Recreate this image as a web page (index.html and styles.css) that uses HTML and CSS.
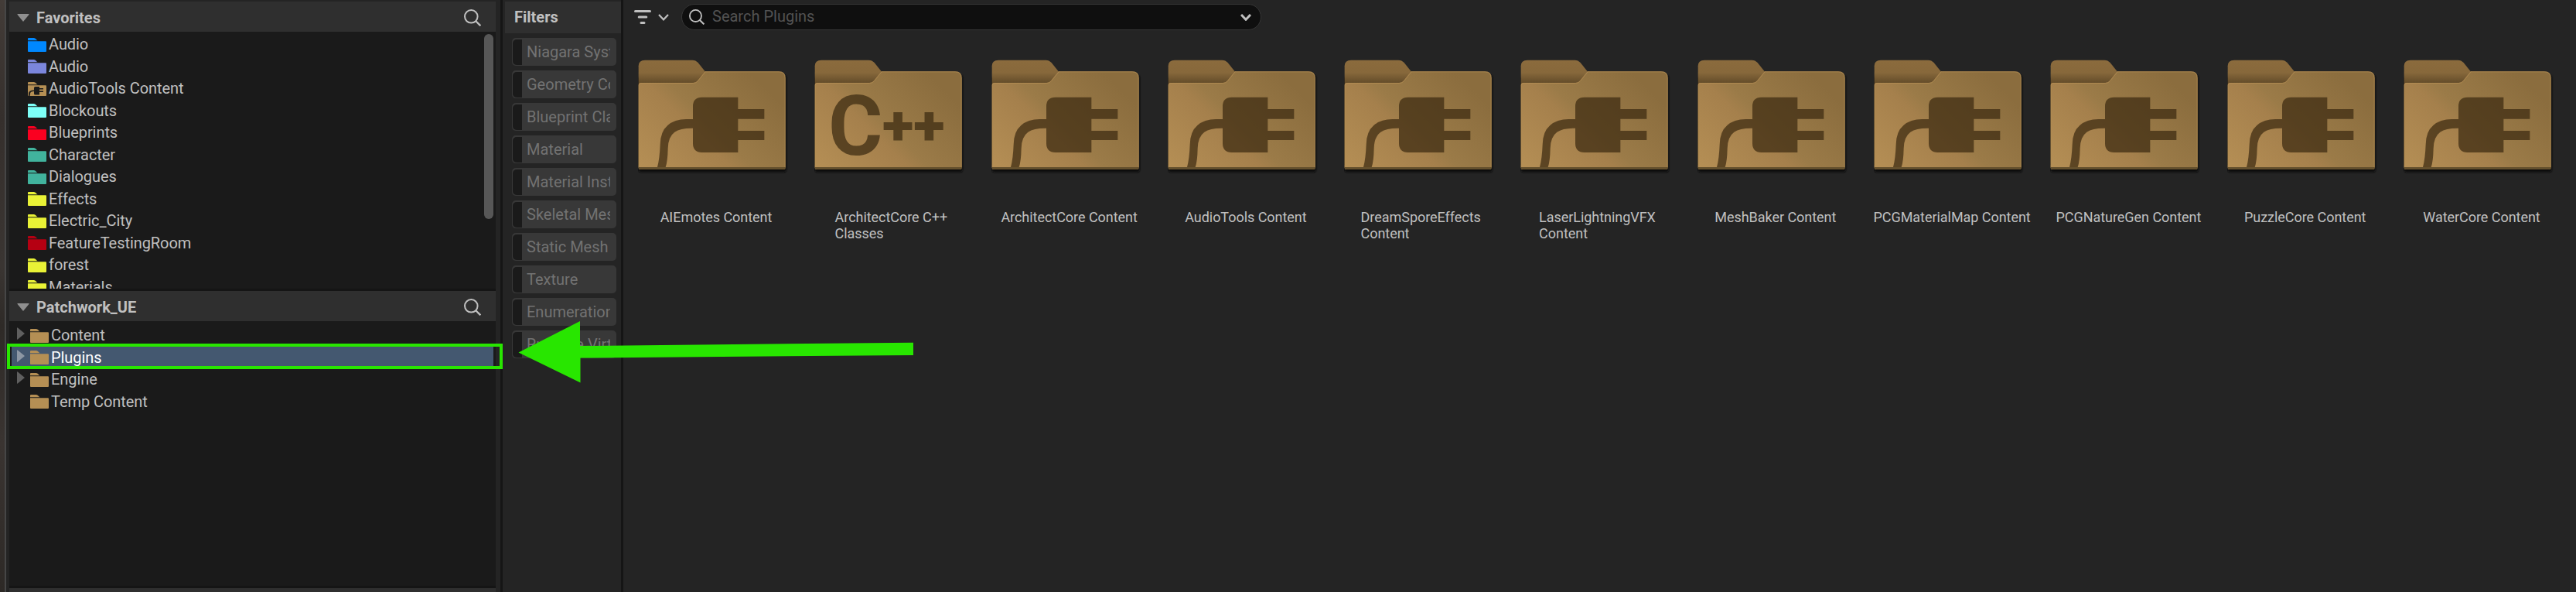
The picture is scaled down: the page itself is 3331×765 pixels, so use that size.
FILE: index.html
```
<!DOCTYPE html>
<html lang="en">
<head>
<meta charset="utf-8">
<title>Content Browser</title>
<link rel="stylesheet" href="styles.css">
</head>
<body>
<svg class="defs" width="0" height="0">
  <defs>
    <linearGradient id="face" gradientUnits="userSpaceOnUse" x1="130" y1="700" x2="530" y2="300">
      <stop offset="0" stop-color="#b58f55"/><stop offset=".45" stop-color="#a5804c"/><stop offset=".55" stop-color="#9b7b48"/><stop offset="1" stop-color="#8b6d3e"/>
    </linearGradient>
    <linearGradient id="tab" x1="0" y1="0" x2="0" y2="1">
      <stop offset="0" stop-color="#8b6b3d"/><stop offset=".5" stop-color="#87683b"/><stop offset="1" stop-color="#5c4626"/>
    </linearGradient>
    <filter id="soft" x="-5%" y="-5%" width="110%" height="110%"><feGaussianBlur stdDeviation="3"/></filter>
    <symbol id="folder" viewBox="0 0 24 18">
      <path d="M0 3V1Q0 0 1 0H8Q9.500 0 12 3Z"/>
      <path d="M0 3H12L13 4.200H0Z" opacity=".25"/>
      <path d="M0 4.200H23Q24 4.200 24 5.200V17Q24 18 23 18H1Q0 18 0 17Z"/>
    </symbol>
    <symbol id="search" viewBox="0 0 22 22">
      <circle cx="9.300" cy="9.300" r="8.300" fill="none" stroke="currentColor" stroke-width="2"/>
      <path d="M15 15L21.300 21.300" stroke="currentColor" stroke-width="2.300"/>
    </symbol>
    <symbol id="down" viewBox="0 0 16 10"><path d="M1 0H15Q16.300 0 15.200 1.200L8 10L.8 1.200Q-.3 0 1 0Z"/></symbol>
    <symbol id="right" viewBox="0 0 10 16"><path d="M0 1Q0-.3 1.200 .8L10 8L1.200 15.200Q0 16.300 0 15Z"/></symbol>
    <symbol id="bigfolder" viewBox="75 225 585 450">
      <path d="M78 330V300H620Q648 280 651 300V657Q651 668 641 668H86Q76 668 76 658Z" fill="#0b0b0b" filter="url(#soft)"/>
      <path d="M77 330V256Q77 233 102 233H286Q299 233 308 243L335 277V330Z" fill="url(#tab)"/>
      <path d="M77 330Q77 321 86 321H288Q300 321 307 312L335 277H622Q647 277 647 302V650Q647 657 640 657H84Q77 657 77 650Z" fill="url(#face)"/>
      <path d="M78.500 648V331Q78.500 322.500 87 322.500H289Q301 322.500 308 313L336 278.500H622Q645.500 278.500 645.500 302V648" fill="none" stroke="#b58f54" stroke-width="3" opacity=".75"/>
      <path d="M77 648H647V651Q647 657 640 657H84Q77 657 77 651Z" fill="#64502d"/>
    </symbol>
    <symbol id="plug" viewBox="75 225 585 450">
      <g fill="#3b2a11" opacity=".72">
        <path d="M323 377H463V423H565V461H463V507H565V543H463V591H323Q288 591 288 556V497Q240 496 217 512Q192 530 191 575Q190 625 182 648H150Q159 615 161 560Q162 510 190 486Q217 462 262 462H288V412Q288 377 323 377Z"/>
      </g>
    </symbol>
    <symbol id="cpp" viewBox="75 225 585 450">
      <g fill="#3b2a11" opacity=".72">
        <text class="cpp-c" x="129" y="599" textLength="211" lengthAdjust="spacingAndGlyphs">C</text>
        <text class="cpp-plus" x="339" y="562" textLength="242" lengthAdjust="spacingAndGlyphs">++</text>
      </g>
    </symbol>
  </defs>
</svg>
<div class="window">
  <div class="viewport-edge"></div>
  <aside class="sources">
    <header class="head"><svg class="tri"><use href="#down"/></svg><h2>Favorites</h2><svg class="mag"><use href="#search"/></svg></header>
    <ul class="tree favorites">
      <li><svg class="fold blue"><use href="#folder"/></svg>Audio</li>
      <li><svg class="fold violet"><use href="#folder"/></svg>Audio</li>
      <li><svg class="fold tan" viewBox="0 0 24 18"><use href="#folder"/><path d="M9.500 6H15V8H20V9.500H15V11.500H20V13H15V16.500H9.500Q8 16.500 8 15V12Q3 12 3 15L2.500 18H1V15Q1 10.500 8 10.500V7.500Q8 6 9.500 6Z" fill="#1a1a1a"/></svg>AudioTools Content</li>
      <li><svg class="fold cyan"><use href="#folder"/></svg>Blockouts</li>
      <li><svg class="fold red"><use href="#folder"/></svg>Blueprints</li>
      <li><svg class="fold teal"><use href="#folder"/></svg>Character</li>
      <li><svg class="fold teal"><use href="#folder"/></svg>Dialogues</li>
      <li><svg class="fold yellow"><use href="#folder"/></svg>Effects</li>
      <li><svg class="fold yellow"><use href="#folder"/></svg>Electric_City</li>
      <li><svg class="fold crimson"><use href="#folder"/></svg>FeatureTestingRoom</li>
      <li><svg class="fold yellow"><use href="#folder"/></svg>forest</li>
      <li><svg class="fold yellow"><use href="#folder"/></svg>Materials</li>
    </ul>
    <div class="scrollbar"></div>
    <div class="split"></div>
    <header class="head"><svg class="tri"><use href="#down"/></svg><h2>Patchwork_UE</h2><svg class="mag"><use href="#search"/></svg></header>
    <ul class="tree project">
      <li><svg class="arrow"><use href="#right"/></svg><svg class="fold tan"><use href="#folder"/></svg>Content</li>
      <li class="selected"><svg class="arrow"><use href="#right"/></svg><svg class="fold tan"><use href="#folder"/></svg>Plugins</li>
      <li><svg class="arrow"><use href="#right"/></svg><svg class="fold tan"><use href="#folder"/></svg>Engine</li>
      <li><span class="arrow"></span><svg class="fold tan"><use href="#folder"/></svg>Temp Content</li>
    </ul>
    <div class="split"></div>
    <div class="head collections"></div>
  </aside>
  <section class="filters">
    <header class="filters-head"><h2>Filters</h2></header>
    <ul class="pills">
      <li><span>Niagara System</span></li>
      <li><span>Geometry Collection</span></li>
      <li><span>Blueprint Class</span></li>
      <li><span>Material</span></li>
      <li><span>Material Instance</span></li>
      <li><span>Skeletal Mesh</span></li>
      <li><span>Static Mesh</span></li>
      <li><span>Texture</span></li>
      <li><span>Enumeration</span></li>
      <li><span>Runtime Virtual Texture</span></li>
    </ul>
  </section>
  <main class="assets">
    <div class="toolbar">
      <svg class="filter-icon" viewBox="0 0 22 18"><path d="M1.500 1.500H20.500M6.200 9H15.800M9 16.500H13" stroke="currentColor" stroke-width="3" stroke-linecap="round"/></svg>
      <svg class="chev" viewBox="0 0 14 9"><path d="M1 1L7 7.300L13 1" fill="none" stroke="currentColor" stroke-width="2.200"/></svg>
      <div class="searchbox">
        <svg class="mag small"><use href="#search"/></svg>
        <span class="placeholder">Search Plugins</span>
        <svg class="chev bold" viewBox="0 0 14 9"><path d="M1 1L7 7.300L13 1" fill="none" stroke="currentColor" stroke-width="3"/></svg>
      </div>
    </div>
    <div class="grid">
      <div class="tile"><svg class="big"><use href="#bigfolder"/><use href="#plug"/></svg><p>AIEmotes Content</p></div>
      <div class="tile"><svg class="big"><use href="#bigfolder"/><use href="#cpp"/></svg><p class="two">ArchitectCore C++<br>Classes</p></div>
      <div class="tile"><svg class="big"><use href="#bigfolder"/><use href="#plug"/></svg><p>ArchitectCore Content</p></div>
      <div class="tile"><svg class="big"><use href="#bigfolder"/><use href="#plug"/></svg><p>AudioTools Content</p></div>
      <div class="tile"><svg class="big"><use href="#bigfolder"/><use href="#plug"/></svg><p class="two">DreamSporeEffects<br>Content</p></div>
      <div class="tile"><svg class="big"><use href="#bigfolder"/><use href="#plug"/></svg><p class="two">LaserLightningVFX<br>Content</p></div>
      <div class="tile"><svg class="big"><use href="#bigfolder"/><use href="#plug"/></svg><p>MeshBaker Content</p></div>
      <div class="tile"><svg class="big"><use href="#bigfolder"/><use href="#plug"/></svg><p>PCGMaterialMap Content</p></div>
      <div class="tile"><svg class="big"><use href="#bigfolder"/><use href="#plug"/></svg><p>PCGNatureGen Content</p></div>
      <div class="tile"><svg class="big"><use href="#bigfolder"/><use href="#plug"/></svg><p>PuzzleCore Content</p></div>
      <div class="tile"><svg class="big"><use href="#bigfolder"/><use href="#plug"/></svg><p>WaterCore Content</p></div>
    </div>
  </main>
  <div class="callout-box"></div>
  <svg class="callout-arrow" viewBox="670 410 520 90"><path d="M670.500 455.500L750 415V447L1181 442.700V459L750.500 462.500V494.500Z" fill="#28e600"/></svg>
</div>
</body>
</html>
```
FILE: styles.css
```
* { box-sizing: border-box; }
body {
  margin: 0;
  background: #242424;
  color: #c0c0c0;
  font: 20px/28px Roboto, "Liberation Sans", sans-serif;
}
h2, p, ul { margin: 0; padding: 0; list-style: none; }
h2 { font-size: 20px; font-weight: 700; line-height: 24px; }
svg { display: block; flex: none; }
.defs { position: absolute; }
.window {
  position: relative;
  display: flex;
  width: 3331px;
  height: 765px;
  overflow: hidden;
}
.viewport-edge {
  width: 8px;
  flex: none;
  border-right: 2px solid #464646;
  background: linear-gradient(#433c38, #352f2c 20%, #3a3532 45%, #2e2a27 55%, #3a3431 75%, #2d2926);
}

/* Sources panel */
.sources {
  position: relative;
  display: flex;
  flex-direction: column;
  flex: none;
  width: 629px;
  margin-left: 4px;
  padding-top: 2px;
}
.head {
  display: flex;
  align-items: center;
  flex: none;
  height: 39px;
  padding: 0 19px 0 10px;
  background: #2f2f2f;
}
.head h2 { flex: 1; margin-left: 9px; padding-top: 3px; }
.tri { width: 16px; height: 10px; margin-top: 3px; fill: #8f8f8f; }
.mag { width: 22px; height: 22px; margin-top: 3px; color: #c0c0c0; }
.collections { height: 5px; }
.split { flex: none; height: 3px; background: #151515; }
.tree { overflow: hidden; background: #1a1a1a; letter-spacing: -.06px; }
.tree li { display: flex; align-items: center; height: 28.5px; white-space: pre; }
.favorites { height: 332px; padding: 2px 0 0 24px; }
.project { height: 342px; padding: 4px 3px 0 3px; }
.project li { padding-left: 7px; }
.fold { width: 24px; height: 18px; margin: 1px 3px 0 0; }
.arrow { width: 10px; height: 16px; margin: -4px 7px 0 0; fill: #5f5f5f; }
.selected { background: #445870; color: #fff; }
.selected .arrow { fill: #8d97a4; }
.blue { fill: #0088ff; }
.violet { fill: #7b86dc; }
.tan { fill: #b58f54; }
.cyan { fill: #7dfff8; }
.red { fill: #fa0020; }
.teal { fill: #41b39d; }
.yellow { fill: #e9f236; }
.crimson { fill: #b50012; }
.scrollbar {
  position: absolute;
  left: 614px;
  top: 44px;
  width: 12px;
  height: 239px;
  border-radius: 6px;
  background: #575757;
}

/* Filters panel */
.filters {
  flex: none;
  width: 159px;
  margin-left: 6px;
  padding: 2px 0 0 3px;
  border: solid #151515;
  border-width: 0 3px;
}
.filters-head { height: 41px; padding: 8px 0 0 12px; background: #2f2f2f; }
.pills { display: grid; grid-template-columns: minmax(0, 1fr); gap: 6px; padding: 6px 6px 0 9px; }
.pills li {
  display: flex;
  height: 36px;
  padding: 2px 8px 1px 1px;
  border-radius: 5px;
  background: #383838;
  color: #727272;
}
.pills li::before { content: ""; flex: none; width: 12px; border-radius: 5px 0 0 5px; background: #1a1a1a; }
.pills span { flex: 1; min-width: 0; margin-left: 6px; padding-top: 2px; overflow: hidden; white-space: nowrap; }

/* Asset view */
.assets { flex: 1; min-width: 0; }
.toolbar { display: flex; align-items: center; height: 44px; padding-left: 14px; }
.filter-icon { width: 22px; height: 18px; }
.chev { width: 14px; height: 9px; margin-left: 9px; }
.searchbox {
  display: flex;
  align-items: center;
  width: 750px;
  height: 34px;
  margin-left: 16px;
  padding: 0 12px 0 9px;
  border: 1px solid #363636;
  border-radius: 17px;
  background: #0f0f0f;
}
.small { width: 20px; height: 20px; margin-top: -1px; }
.placeholder { flex: 1; margin: -3px 0 0 10px; color: #525252; }
.bold { margin-left: 0; }
.grid { display: grid; grid-template-columns: repeat(11, 228.3px); margin: 31px 0 0 19px; }
.big { width: 195px; height: 150px; }
.tile p {
  width: max-content;
  margin: 45px 0 0 101px;
  transform: translateX(-50%);
  font-size: 18px;
  line-height: 21px;
  letter-spacing: -.04px;
  white-space: nowrap;
}
.tile .two { margin-left: 99px; }
.cpp-c { font: 700 320px Roboto, sans-serif; }
.cpp-plus { font: 900 210px Roboto, sans-serif; }

/* Tutorial annotations laid over the window */
.callout-box {
  position: absolute;
  left: 9px;
  top: 444px;
  width: 641px;
  height: 33px;
  border: 4px solid #28e600;
}
.callout-arrow { position: absolute; left: 670px; top: 410px; width: 520px; height: 90px; }
```
